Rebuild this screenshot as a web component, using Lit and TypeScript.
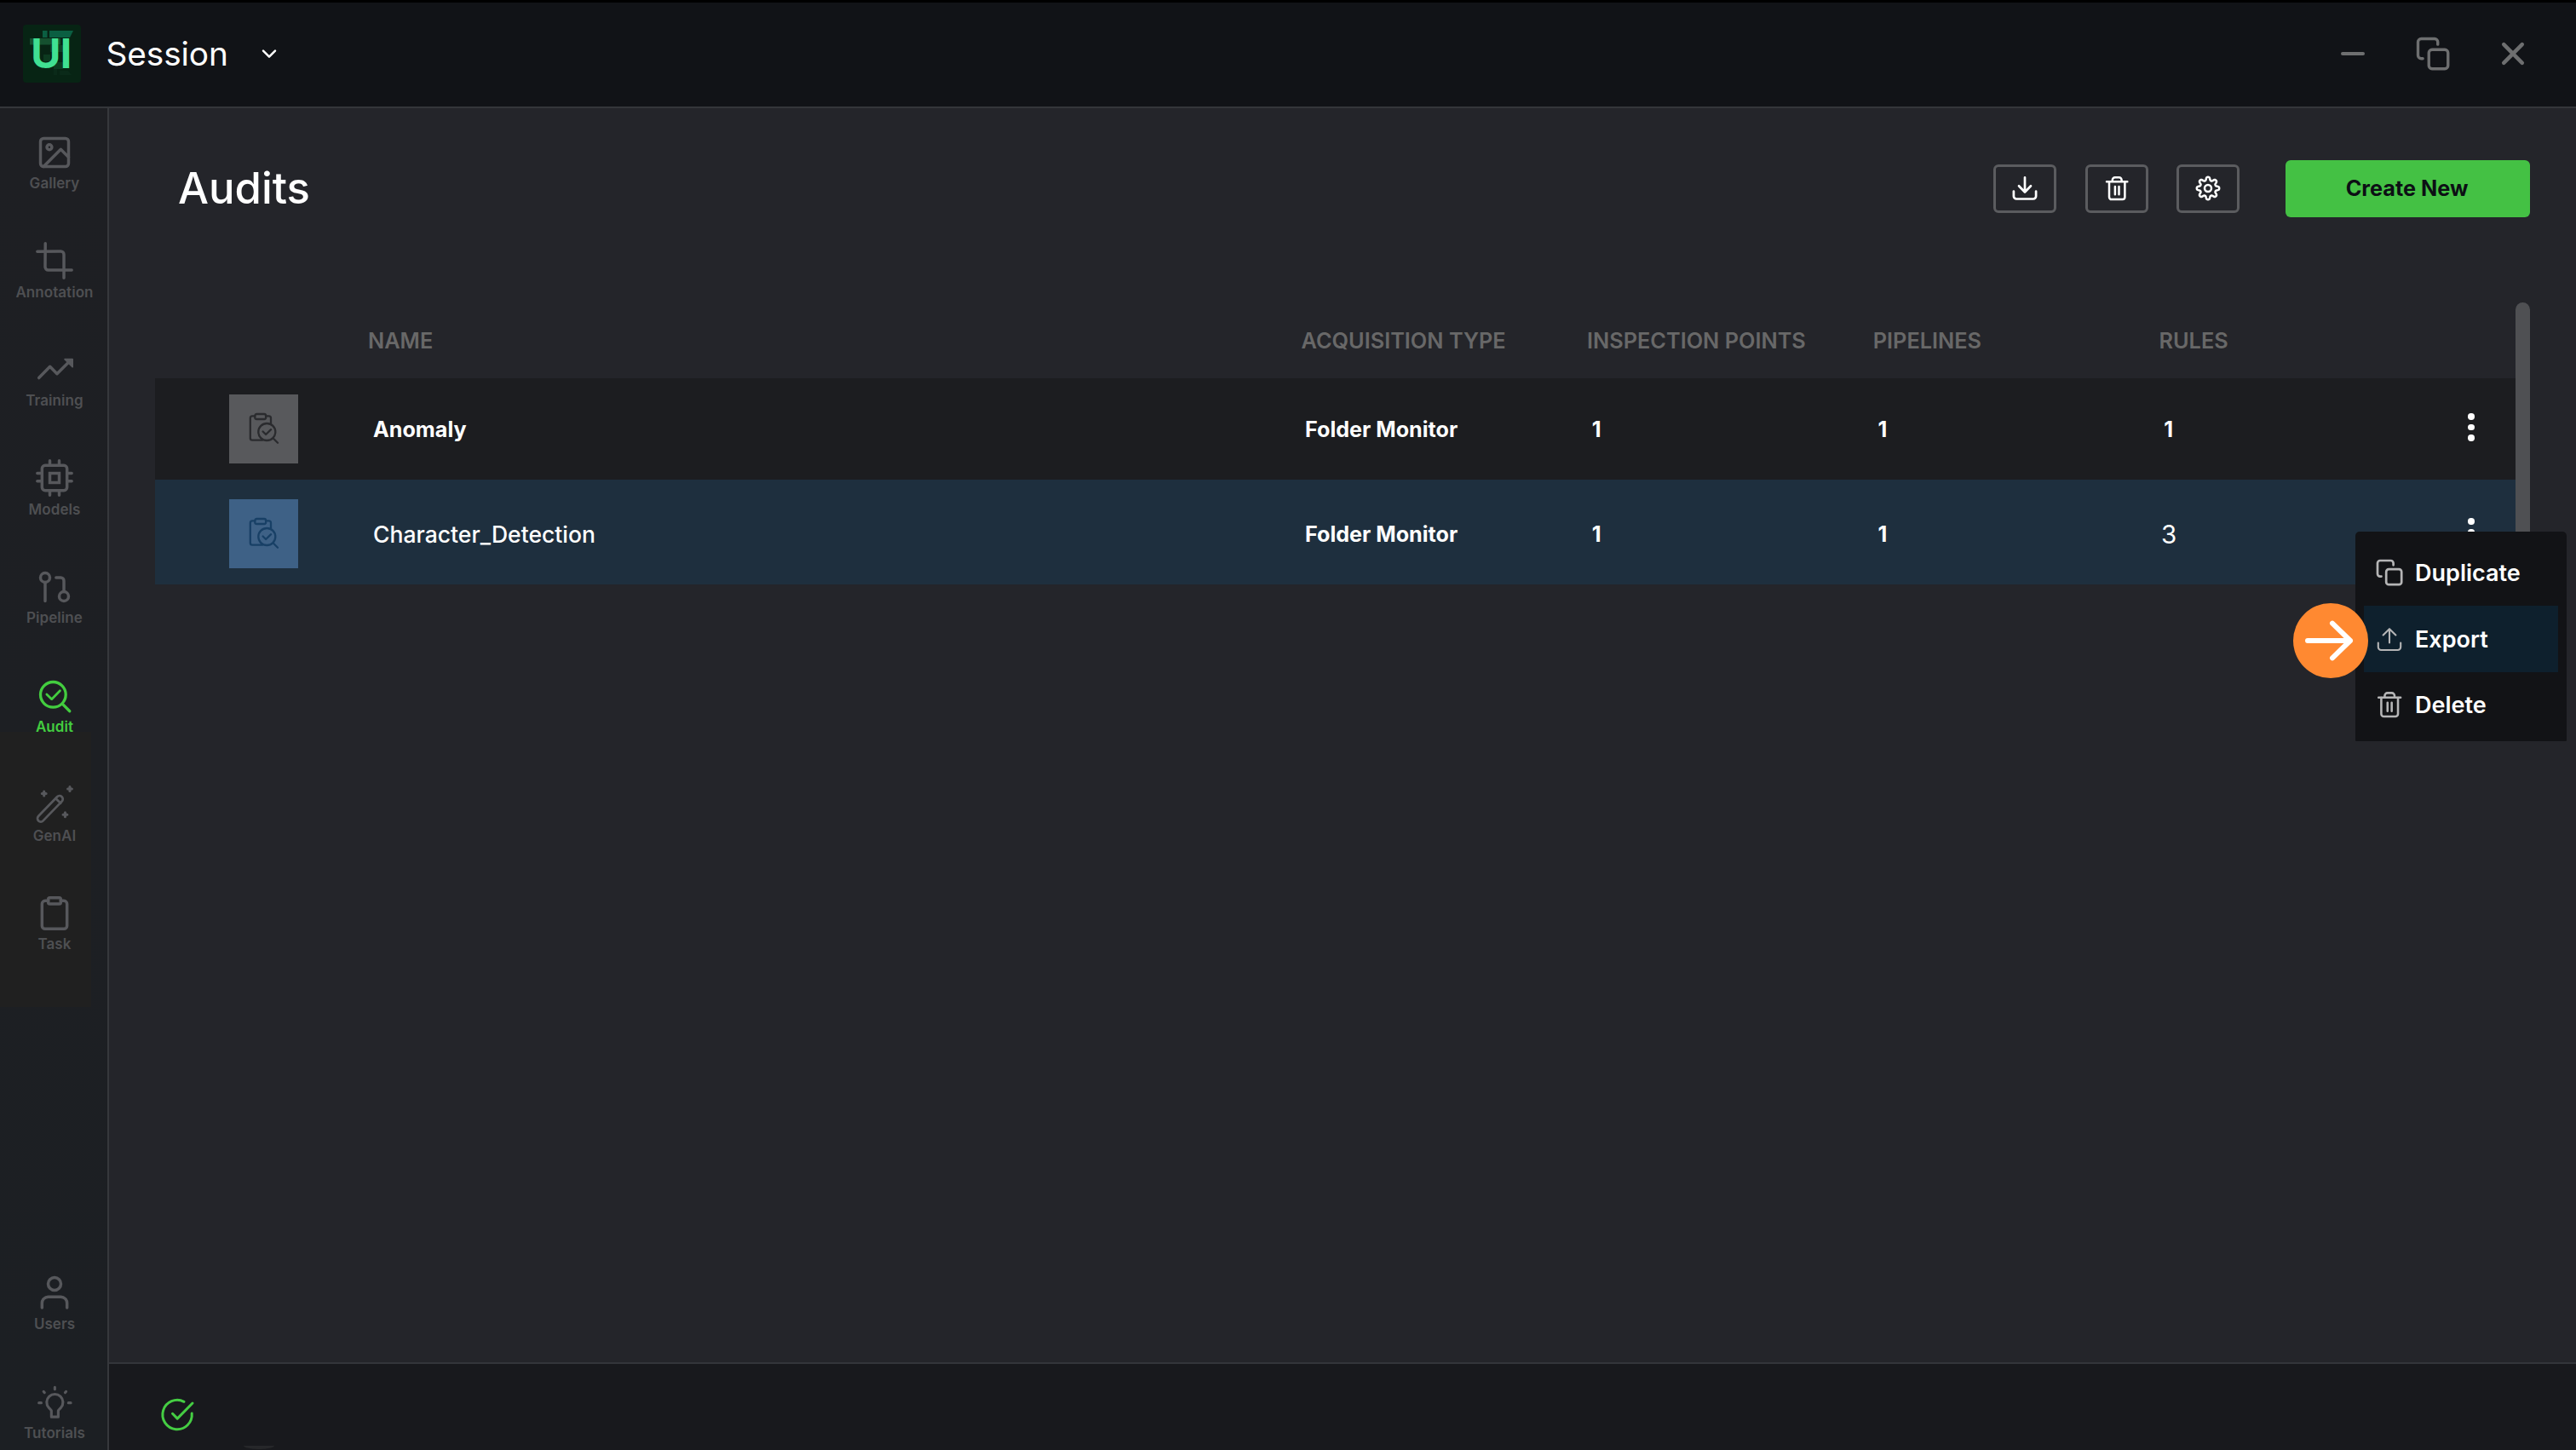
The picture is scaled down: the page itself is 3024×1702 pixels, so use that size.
import { LitElement, html, css, svg, nothing, type SVGTemplateResult } from "lit";
import { customElement, property } from "lit/decorators.js";

/* Closed outline of an eight-toothed cog with softly rounded teeth. */
function cogPath(cx: number, cy: number, radius: number, depth: number): string {
  const points: string[] = [];
  for (let i = 0; i < 160; i++) {
    const a = (i / 160) * Math.PI * 2;
    const wave = Math.cos(a * 8);
    const r = radius + depth * Math.tanh(wave * 1.6) / Math.tanh(1.6);
    points.push(`${(cx + r * Math.sin(a)).toFixed(2)} ${(cy - r * Math.cos(a)).toFixed(2)}`);
  }
  return `M${points.join("L")}Z`;
}

interface Glyph {
  box: number;
  stroke: number;
  body: SVGTemplateResult;
}

const trash = svg`
  <path d="M3 7.2h24.3M9.8 7V5.2a3 3 0 0 1 3-3h4.8a3 3 0 0 1 3 3V7"/>
  <path d="M6 7.5v17.8a2.8 2.8 0 0 0 2.8 2.8h12.8a2.8 2.8 0 0 0 2.8-2.8V7.5"/>
  <path d="M12.9 13v9.3M17.5 13v9.3"/>`;

const glyphs: Record<string, Glyph> = {
  gallery: { box: 24, stroke: 1.9, body: svg`<rect x="3" y="3" width="18" height="18" rx="2"/><circle cx="8.7" cy="8.6" r="1.6"/><path d="M21 15l-5-5L5 21"/>` },
  annotation: { box: 24, stroke: 1.9, body: svg`<path d="M6.13 1 6 16a2 2 0 0 0 2 2h15"/><path d="M1 6.13 16 6a2 2 0 0 1 2 2v15"/>` },
  training: { box: 24, stroke: 1.9, body: svg`<path d="M2 17.2l7.1-7.2 4.5 4.6 8.2-8.2"/><path d="M18.6 5.3h4.9v4.9z" fill="currentColor" stroke-width="1"/>` },
  models: { box: 24, stroke: 1.9, body: svg`<rect x="4" y="4" width="16" height="16" rx="2"/><rect x="9" y="9" width="6" height="6" stroke-linejoin="miter"/><path d="M9 1v3M15 1v3M9 20v3M15 20v3M20 9h3M20 14h3M1 9h3M1 14h3"/>` },
  pipeline: { box: 24, stroke: 1.9, body: svg`<circle cx="18" cy="18" r="3"/><circle cx="6" cy="6" r="3"/><path d="M13 6h3a2 2 0 0 1 2 2v7M6 9v12"/>` },
  audit: { box: 24, stroke: 1.8, body: svg`<circle cx="11.1" cy="11.1" r="8.1"/><path d="M17 17l4.7 4.7"/><path d="M7 10.9l3.2 3.1 5.3-5.4" stroke-width="1.5"/>` },
  genai: { box: 24, stroke: 1.5, body: svg`<rect x="-1.55" y="12.8" width="21.5" height="4.2" rx="2.1" transform="rotate(-46 9.2 14.9)"/><path d="M12.9 8.4l3 2.9"/><path d="M5.3 3.9v2.6M4 5.2h2.6M21.8.9v2.6M20.5 2.2h2.6M18.8 17.4V20M17.5 18.7h2.6" stroke-width="1.7"/>` },
  task: { box: 24, stroke: 1.9, body: svg`<path d="M16 4h2a2 2 0 0 1 2 2v14a2 2 0 0 1-2 2H6a2 2 0 0 1-2-2V6a2 2 0 0 1 2-2h2"/><rect x="8" y="2" width="8" height="4" rx="1"/>` },
  users: { box: 24, stroke: 1.9, body: svg`<circle cx="12" cy="6" r="4.1"/><path d="M20 21.3v-3a4 4 0 0 0-4-4H8a4 4 0 0 0-4 4v3"/>` },
  tutorials: { box: 24, stroke: 1.7, body: svg`<path d="M10 21.9v-3.7c0-.8-.9-1.3-1.7-2.2a5.2 5.2 0 1 1 7.8 0c-.8.9-1.700 1.400-1.700 2.200v3.700z"/><path d="M12.2 2.900v1.300M2 12.900h1.500M20.900 12.900h1.500M5 5.700l.6.6M19.400 5.700l-.6.6"/>` },
  download: { box: 30, stroke: 2.7, body: svg`<path d="M15 2.300v17M8 12.300l7 7.200 7-7.200"/><path d="M1.900 18.600v5.600a3.300 3.300 0 0 0 3.300 3.300h19.600a3.300 3.300 0 0 0 3.300-3.300v-5.600"/>` },
  trash: { box: 30, stroke: 2.5, body: trash },
  trashLight: { box: 30, stroke: 2.4, body: trash },
  settings: { box: 30, stroke: 2.5, body: svg`<path d="${cogPath(15, 15, 11.3, 1.9)}"/><circle cx="15" cy="15" r="4"/>` },
  copy: { box: 32, stroke: 2.7, body: svg`<rect x="12.200" y="12.200" width="18" height="18" rx="3"/><path d="M20.600 7.300V5a3 3 0 0 0-3-3H5a3 3 0 0 0-3 3v12.600a3 3 0 0 0 3 3h1.500"/>` },
  upload: { box: 32, stroke: 2.1, body: svg`<path d="M16 20.500V4.300M8.600 11.500L16 4.200l7.400 7.300"/><path d="M2.800 20.600v5a3.400 3.400 0 0 0 3.400 3.400h19.600a3.400 3.400 0 0 0 3.400-3.400v-5"/>` },
  minimise: { box: 40, stroke: 4, body: svg`<path d="M8 20h24"/>` },
  close: { box: 40, stroke: 4.5, body: svg`<path d="M9.200 9.200l21.600 21.600M30.800 9.200L9.200 30.800"/>` },
  chevron: { box: 24, stroke: 2.5, body: svg`<path d="M5 8.700l7 7 7-7"/>` },
  done: { box: 40, stroke: 3, body: svg`<path d="M28 4.300A17.200 17.200 0 1 0 37.200 18"/><path d="M14.500 18.300l5.700 5.800L38 6"/>` },
  report: { box: 40, stroke: 2.3, body: svg`<path d="M9.300 5.300H6.200a2.400 2.400 0 0 0-2.400 2.400v23.600a2.400 2.400 0 0 0 2.400 2.400H18M22 5.300h3.600A2.400 2.400 0 0 1 28 7.700v6"/><rect x="9.300" y="3" width="12.800" height="6" rx="2"/><circle cx="23.300" cy="24" r="10"/><path d="M18.600 23.500l3.500 3.500 6-5.800M31 31.800l5 5"/>` },
  arrow: { box: 88, stroke: 6, body: svg`<path d="M17 44h50M46 23.700L67 44 46 64.300"/>` },
};

@customElement("ui-icon")
export class UiIcon extends LitElement {
  @property() name = "";

  static styles = css`
    :host { display: block; flex: none; width: 44px; height: 44px; }
    svg { display: block; width: 100%; height: 100%; overflow: visible; }
  `;

  render() {
    const g = glyphs[this.name];
    if (!g) return nothing;
    return html`<svg viewBox="0 0 ${g.box} ${g.box}" fill="none" stroke="currentColor"
      stroke-width=${g.stroke} stroke-linecap="round" stroke-linejoin="round">${g.body}</svg>`;
  }
}

interface NavItem { icon: string; label: string; active?: boolean }

interface Audit {
  name: string;
  acquisition: string;
  points: number;
  pipelines: number;
  rules: number;
  selected?: boolean;
}

@customElement("app-root")
export class AppRoot extends LitElement {
  private topNav: NavItem[] = [
    { icon: "gallery", label: "Gallery" },
    { icon: "annotation", label: "Annotation" },
    { icon: "training", label: "Training" },
    { icon: "models", label: "Models" },
    { icon: "pipeline", label: "Pipeline" },
    { icon: "audit", label: "Audit", active: true },
    { icon: "genai", label: "GenAI" },
    { icon: "task", label: "Task" },
  ];

  private bottomNav: NavItem[] = [
    { icon: "users", label: "Users" },
    { icon: "tutorials", label: "Tutorials" },
  ];

  private audits: Audit[] = [
    { name: "Anomaly", acquisition: "Folder Monitor", points: 1, pipelines: 1, rules: 1 },
    { name: "Character_Detection", acquisition: "Folder Monitor", points: 1, pipelines: 1, rules: 3, selected: true },
  ];

  static styles = css`
    * { box-sizing: border-box; }
    :host {
      display: flex;
      flex-direction: column;
      position: relative;
      width: 3024px;
      height: 1702px;
      overflow: hidden;
      background: #24252a;
      color: #fff;
      font-family: "Inter", sans-serif;
    }

    .titlebar {
      flex: none;
      display: flex;
      align-items: center;
      height: 127px;
      padding: 0 54px 2px 27px;
      border-top: 3px solid #000;
      border-bottom: 2px solid #34363a;
      background: #111317;
    }
    .logo {
      position: relative;
      flex: none;
      width: 68px;
      height: 68px;
      border-radius: 4px;
      background: #072414;
      overflow: hidden;
    }
    .logo-shapes { position: absolute; left: 0; top: 0; width: 68px; height: 68px; }
    .logo-text {
      position: absolute;
      left: 9.2px;
      top: 4px;
      font-size: 48px;
      line-height: 60px;
      font-weight: 700;
      letter-spacing: -0.5px;
      color: #40e092;
      white-space: nowrap;
    }
    .session {
      margin: -1px 0 0 29.500px;
      font-size: 38.800px;
      line-height: 48px;
      letter-spacing: -0.100px;
      white-space: nowrap;
    }
    .chevron { width: 24px; height: 24px; margin-left: 36.500px; }
    .window-controls {
      display: flex;
      align-items: center;
      gap: 54px;
      margin-left: auto;
      color: #6e6f70;
    }
    .window-controls ui-icon { width: 40px; height: 40px; }

    .body { flex: 1; min-height: 0; display: grid; grid-template-columns: 128px 1fr; }

    .sidebar {
      display: flex;
      flex-direction: column;
      justify-content: space-between;
      border-right: 2px solid #36383c;
      background: linear-gradient(#202020, #202020) 0 732px / 107px 323px no-repeat, linear-gradient(#1e1f23, #1c1f23);
      color: #57585c;
      padding: 29.600px 0 0 2px;
      height: 1575px;
    }
    .nav-group { display: grid; grid-auto-rows: 127.600px; }
    .nav-group.low { height: 206.500px; }
    .nav-item { display: flex; flex-direction: column; align-items: center; }
    .nav-label {
      margin-top: 4.500px;
      font-size: 17px;
      line-height: 20px;
      font-weight: 600;
      letter-spacing: 0.050px;
      color: #4e4f52;
    }
    .nav-item.active, .nav-item.active .nav-label { color: #43cd3f; }

    .content { display: flex; flex-direction: column; min-width: 0; }
    .main { flex: 1; padding: 60px 54px 0; background: #24252a; }
    .toolbar { display: flex; align-items: center; height: 68px; padding-left: 27px; }
    .page-title {
      margin: 0;
      font-size: 50.800px;
      line-height: 62px;
      font-weight: 500;
    }
    .actions { display: flex; align-items: center; gap: 33.500px; margin-left: auto; }
    .icon-button {
      display: grid;
      place-items: center;
      width: 74px;
      height: 57px;
      padding: 0;
      border: 3px solid #5b5c5f;
      border-radius: 6px;
      background: transparent;
      color: #fff;
    }
    .icon-button ui-icon { width: 30px; height: 30px; }
    .create {
      width: 287px;
      height: 67px;
      margin-left: 20.500px;
      padding: 0 2px 0 0;
      border: 0;
      border-radius: 6px;
      background: #44c144;
      color: #0c0f14;
      font-family: inherit;
      font-size: 25.250px;
      line-height: 32px;
      font-weight: 650;
    }

    .table-area { display: flex; margin-top: 100px; }
    .table { flex: 1; }
    .scrollbar { width: 17px; height: 480px; border-radius: 9px 9px 0 0; background: #4f5053; }
    .row {
      display: grid;
      grid-template-columns: 250px 1095.500px 335.500px 335.800px 335.700px 335.500px 62px 1fr;
      align-items: center;
      height: 119px;
      background: #1c1d20;
      font-size: 25.150px;
      line-height: 32px;
      font-weight: 650;
      white-space: nowrap;
    }
    .row.head { height: 89px; background: transparent; color: #686868; font-size: 25.300px; font-weight: 600; }
    .row.selected { height: 123px; padding-top: 4px; background: #1e2f3e; }
    .thumb {
      display: grid;
      place-items: center;
      width: 81px;
      height: 81px;
      margin: -1px 0 0 87px;
      background: #58595c;
      color: #2a2b2e;
    }
    .thumb ui-icon { width: 40px; height: 40px; margin: -1px 0 0 1px; }
    .selected .thumb { background: #3e6186; color: #184066; }
    .name { padding-left: 6px; }
    .selected .name { font-size: 26.550px; font-weight: 500; }
    .type { padding-left: 4.500px; }
    .num { padding-left: 5.700px; }
    .selected .rules { padding-left: 2.500px; font-size: 29.500px; font-weight: 400; }
    .kebab { display: grid; justify-content: center; gap: 5.300px; margin-top: -4px; }
    .dot { width: 7.400px; height: 7.400px; border-radius: 50%; background: #fff; }

    .statusbar {
      flex: none;
      position: relative;
      display: flex;
      align-items: center;
      height: 103px;
      padding: 19px 60px 0;
      border-top: 2.500px solid #33353a;
      background: #18191d;
      color: #45cd43;
    }
    .statusbar ui-icon { width: 40px; height: 40px; }
    .notch {
      position: absolute;
      left: 158px;
      bottom: 1px;
      width: 36px;
      height: 4px;
      border-radius: 0 0 50% 50% / 0 0 100% 100%;
      background: #26272a;
    }

    .menu {
      position: absolute;
      left: 2765px;
      top: 624px;
      width: 248px;
      height: 246px;
      padding: 9.500px 10px 0;
      border-radius: 5px 5px 1px 1px;
      background: #121316;
    }
    .menu-item {
      display: flex;
      align-items: center;
      gap: 14px;
      height: 77.500px;
      padding-left: 14px;
      font-size: 27px;
      line-height: 34px;
      font-weight: 600;
    }
    .menu-item.hover { background: #0e202d; }
    .menu-item ui-icon { width: 32px; height: 32px; color: #b5b5b6; }
    .menu-item span { padding-top: 2px; }
    .pointer {
      position: absolute;
      left: 2692px;
      top: 708px;
      width: 88px;
      height: 88px;
      border-radius: 50%;
      background: #ff8931;
    }
    .pointer ui-icon { width: 88px; height: 88px; }
  `;

  private nav(items: NavItem[], low = false) {
    return html`<nav class="nav-group ${low ? "low" : ""}">
      ${items.map((i) => html`<div class="nav-item ${i.active ? "active" : ""}">
        <ui-icon name=${i.icon}></ui-icon><span class="nav-label">${i.label}</span>
      </div>`)}
    </nav>`;
  }

  private row(a: Audit) {
    return html`<div class="row ${a.selected ? "selected" : ""}">
      <div class="thumb"><ui-icon name="report"></ui-icon></div>
      <div class="name">${a.name}</div>
      <div class="type">${a.acquisition}</div>
      <div class="num">${a.points}</div>
      <div class="num">${a.pipelines}</div>
      <div class="num rules">${a.rules}</div>
      <div class="kebab"><i class="dot"></i><i class="dot"></i><i class="dot"></i></div>
    </div>`;
  }

  render() {
    return html`
      <header class="titlebar">
        <div class="logo">
          <svg class="logo-shapes" viewBox="0 0 68 68">
            <rect x="23" y="7" width="5.5" height="8" fill="#0b5f42"/>
            <path d="M31 7h28l-4 8H31z" fill="#0b5f42"/>
            <rect x="8" y="16" width="36" height="7.5" fill="#15502f"/>
            <rect x="24" y="35" width="8" height="8" fill="#0d3a20"/>
            <rect x="32" y="24" width="16" height="8" fill="#0e3d25"/>
            <rect x="36" y="44" width="11" height="8" fill="#0c3a20"/>
            <path d="M36 52h4v7h-4zM43 54h10l4 5H43z" fill="#0a2a19"/>
          </svg>
          <span class="logo-text">UI</span>
        </div>
        <span class="session">Session</span>
        <ui-icon class="chevron" name="chevron"></ui-icon>
        <div class="window-controls">
          <ui-icon name="minimise"></ui-icon><ui-icon name="copy"></ui-icon><ui-icon name="close"></ui-icon>
        </div>
      </header>
      <div class="body">
        <aside class="sidebar">${this.nav(this.topNav)}${this.nav(this.bottomNav, true)}</aside>
        <div class="content">
          <main class="main">
            <div class="toolbar">
              <h1 class="page-title">Audits</h1>
              <div class="actions">
                <button class="icon-button"><ui-icon name="download"></ui-icon></button>
                <button class="icon-button"><ui-icon name="trash"></ui-icon></button>
                <button class="icon-button"><ui-icon name="settings"></ui-icon></button>
                <button class="create">Create New</button>
              </div>
            </div>
            <div class="table-area">
              <div class="table">
                <div class="row head">
                  <div></div><div>NAME</div><div>ACQUISITION TYPE</div><div>INSPECTION POINTS</div><div>PIPELINES</div><div>RULES</div>
                </div>
                ${this.audits.map((a) => this.row(a))}
              </div>
              <div class="scrollbar"></div>
            </div>
          </main>
          <footer class="statusbar"><ui-icon name="done"></ui-icon><i class="notch"></i></footer>
        </div>
      </div>
      <div class="menu">
        <div class="menu-item"><ui-icon name="copy"></ui-icon><span>Duplicate</span></div>
        <div class="menu-item hover"><ui-icon name="upload"></ui-icon><span>Export</span></div>
        <div class="menu-item"><ui-icon name="trashLight"></ui-icon><span>Delete</span></div>
      </div>
      <div class="pointer"><ui-icon name="arrow"></ui-icon></div>
    `;
  }
}
